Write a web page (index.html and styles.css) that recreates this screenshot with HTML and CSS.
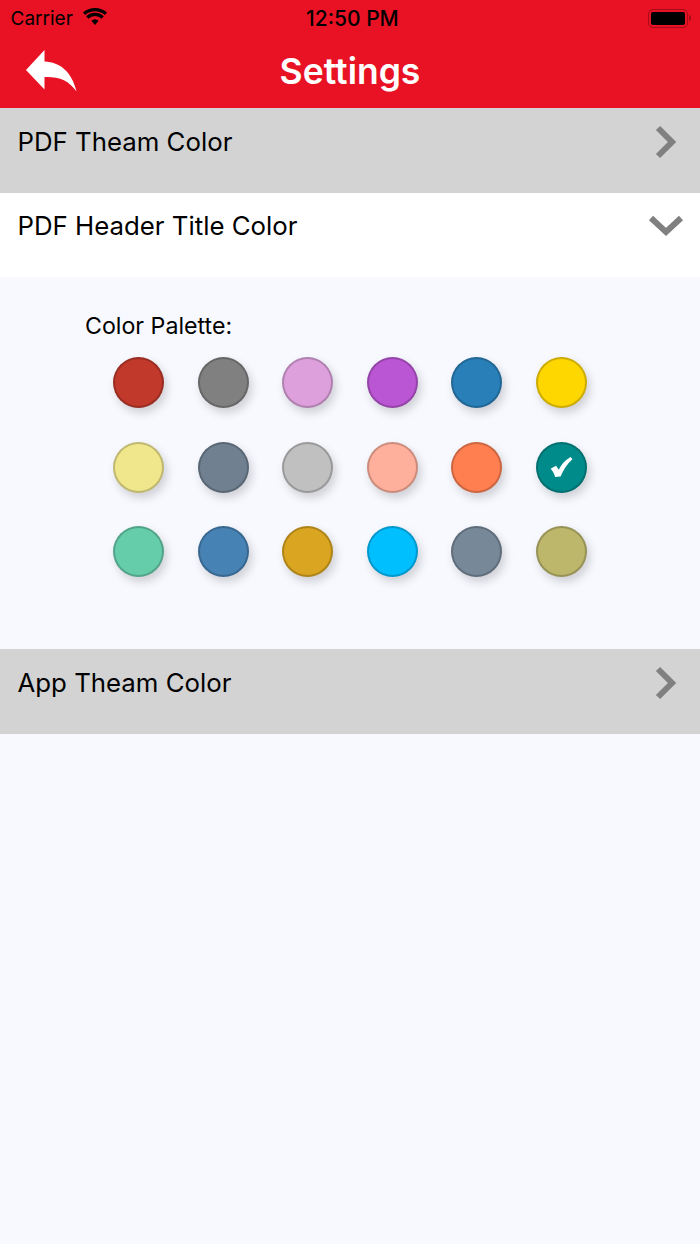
FILE: index.html
```html
<!DOCTYPE html>
<html lang="en">

<head>
  <meta charset="UTF-8">
  <title>Settings</title>
  <link rel="stylesheet" href="styles.css">
</head>

<body>
  <header class="header">
    <div class="status-bar">
      <div class="status-left">
        <span class="carrier">Carrier</span>
        <svg class="wifi" width="24" height="17" viewBox="0 0 24 17">
          <path d="M12 17l-3.600-4.200a5.400 5.400 0 0 1 7.200 0z" fill="#000" />
          <path d="M3.200 8.200a13 13 0 0 1 17.600 0l-2.200 2.500a9.600 9.600 0 0 0-13.200 0z" fill="#000" />
          <path d="M0 4.600a18 18 0 0 1 24 0l-2.100 2.400a15 15 0 0 0-19.800 0z" fill="#000" />
        </svg>
      </div>
      <span class="time">12:50 PM</span>
      <div class="battery">
        <div class="battery-body"><div class="battery-fill"></div></div>
        <div class="battery-tip"></div>
      </div>
    </div>
    <div class="title-bar">
      <svg class="back-icon" width="52" height="42" viewBox="0 0 52 42">
        <path d="M0 20L18.500 0V11.500C34 12 46 22 50.500 41.500C43 30.500 33 26.500 18.500 27V39.500Z" fill="#fff" />
      </svg>
      <h1 class="title">Settings</h1>
    </div>
  </header>

  <div class="row row-closed">
    <span class="row-label">PDF Theam Color</span>
    <svg class="chevron" width="24" height="36" viewBox="0 0 24 36">
      <path d="M4 4L18 18L4 32" />
    </svg>
  </div>

  <div class="row row-open">
    <span class="row-label">PDF Header Title Color</span>
    <svg class="chevron" width="36" height="24" viewBox="0 0 36 24">
      <path d="M3 4L18 18L33 4" />
    </svg>
  </div>

  <section class="palette">
    <p class="palette-title">Color Palette:</p>
    <div class="swatches">
      <div class="swatch" style="background-color: #c0392b;"></div>
      <div class="swatch" style="background-color: #808080;"></div>
      <div class="swatch" style="background-color: #dda0dd;"></div>
      <div class="swatch" style="background-color: #ba55d3;"></div>
      <div class="swatch" style="background-color: #2980b9;"></div>
      <div class="swatch" style="background-color: #ffd700;"></div>
      <div class="swatch" style="background-color: #f0e68c;"></div>
      <div class="swatch" style="background-color: #708090;"></div>
      <div class="swatch" style="background-color: #c0c0c0;"></div>
      <div class="swatch" style="background-color: #ffb09c;"></div>
      <div class="swatch" style="background-color: #ff7f50;"></div>
      <div class="swatch" style="background-color: #008b8b;">
        <svg width="23" height="20" viewBox="0 0 24 22">
          <path d="M0 13L6 9.500L9 14C11.500 8.500 15.500 4 22 0L24 2.500C18 8 14 14 11 21.500L5 22C4 18.500 2.500 15.500 0 13Z" fill="#fff" />
        </svg>
      </div>
      <div class="swatch" style="background-color: #66cdaa;"></div>
      <div class="swatch" style="background-color: #4682b4;"></div>
      <div class="swatch" style="background-color: #daa520;"></div>
      <div class="swatch" style="background-color: #00bfff;"></div>
      <div class="swatch" style="background-color: #778899;"></div>
      <div class="swatch" style="background-color: #bdb76b;"></div>
    </div>
  </section>

  <div class="row row-closed">
    <span class="row-label">App Theam Color</span>
    <svg class="chevron" width="24" height="36" viewBox="0 0 24 36">
      <path d="M4 4L18 18L4 32" />
    </svg>
  </div>
</body>

</html>
```

FILE: styles.css
```css
* {
  box-sizing: border-box;
}

body {
  margin: 0;
  height: 1244px;
  overflow: hidden;
  background-color: #f8f9ff;
  color: #000;
  font-family: Inter, "Noto Sans", sans-serif;
}

.header {
  height: 108px;
  background-color: #e81224;
}

.status-bar {
  display: flex;
  justify-content: space-between;
  align-items: center;
  height: 36px;
  padding: 0 9px 0 10.500px;
}

.status-left {
  display: flex;
  align-items: center;
  gap: 10px;
}

.carrier {
  font-size: 19px;
}

.wifi {
  margin-bottom: 3px;
}

.time {
  font-size: 21px;
  font-weight: 500;
  margin-left: -50px;
}

.battery {
  display: flex;
  align-items: center;
}

.battery-body {
  width: 40px;
  height: 19px;
  padding: 2px;
  border: 1px solid #a50d1a;
  border-radius: 5px;
}

.battery-fill {
  width: 100%;
  height: 100%;
  background-color: #000;
  border-radius: 2px;
}

.battery-tip {
  width: 2px;
  height: 6px;
  margin-left: 1px;
  background-color: #a50d1a;
  border-radius: 0 2px 2px 0;
}

.title-bar {
  display: flex;
  justify-content: center;
  align-items: center;
  height: 72px;
  padding-bottom: 2px;
  position: relative;
}

.back-icon {
  position: absolute;
  left: 26px;
  top: 14px;
}

.title {
  margin: 0;
  color: #fff;
  font-size: 35.500px;
  font-weight: 600;
}

.row {
  display: flex;
  justify-content: space-between;
  height: 84.500px;
  padding: 15.700px 16px 0 17.500px;
}

.row-closed {
  background-color: #d3d3d3;
}

.row-open {
  background-color: #fff;
}

.row-label {
  font-size: 25.800px;
  line-height: 36px;
}

.row-closed .chevron {
  margin-right: 6px;
}

.row-open .chevron {
  margin-top: 6px;
}

.chevron path {
  fill: none;
  stroke: #808080;
  stroke-width: 6;
}

.palette {
  height: 372px;
  padding: 35px 85px 0;
}

.palette-title {
  margin: 0;
  font-size: 23.200px;
  line-height: 28px;
}

.swatches {
  display: grid;
  grid-template-columns: repeat(6, 51px);
  column-gap: 33.500px;
  row-gap: 33.500px;
  margin: 17px 0 0 28px;
}

.swatch {
  display: flex;
  justify-content: center;
  align-items: center;
  width: 51px;
  height: 51px;
  border: 2px solid rgba(0, 0, 0, 0.2);
  border-radius: 50%;
  box-shadow: 3px 5px 10px rgba(0, 0, 0, 0.17);
}
```
